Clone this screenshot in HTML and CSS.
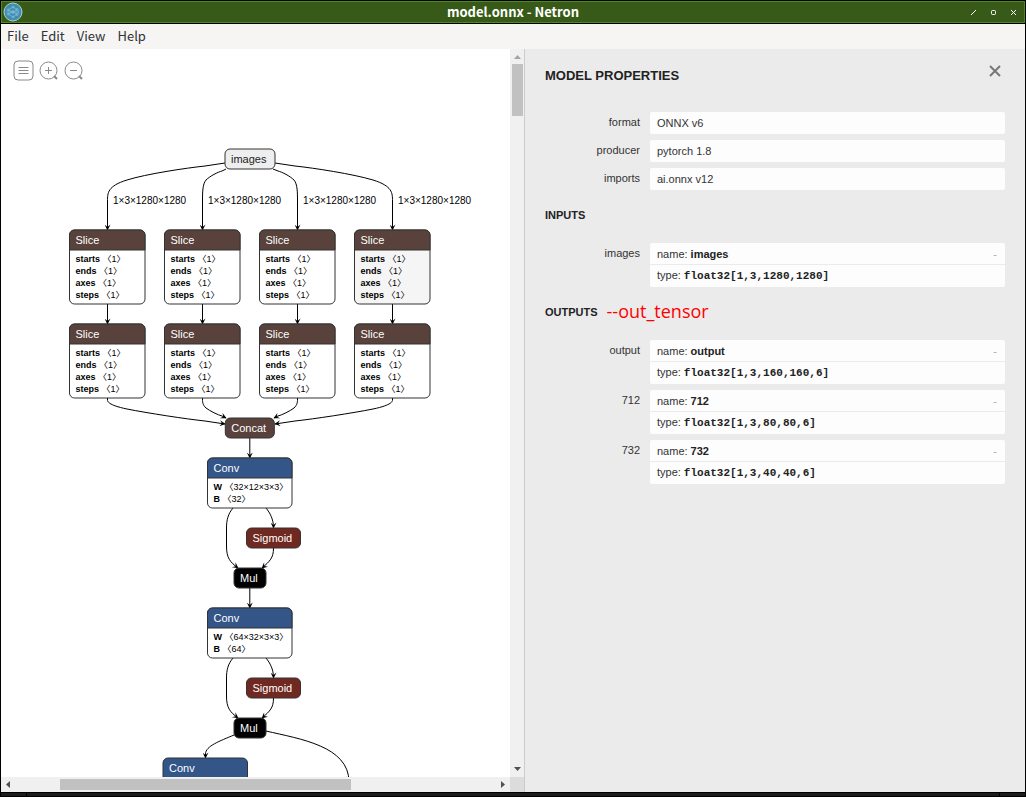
FILE: index.html
```html
<!DOCTYPE html>
<html lang="en">
<head>
<meta charset="utf-8">
<title>model.onnx - Netron</title>
<link rel="stylesheet" href="styles.css">
</head>
<body>
<div class="window">
  <header class="titlebar">
    <svg class="app-icon" width="20" height="20" viewBox="0 0 20 20" aria-hidden="true">
      <circle cx="10" cy="10" r="9" fill="#3f8fb4" stroke="#b5cfc4"/>
      <g fill="none" stroke="#8fc1da" stroke-width="0.6">
        <path d="M5 8L10 5L14 7.500L16 10L14 12.500L10 15L5 12L10 10L5 8M4 10H16M14 7.500L10 10L14 12.500"/>
        <circle cx="5" cy="8" r="1"/><circle cx="5" cy="12" r="1"/><circle cx="10" cy="5" r="1"/><circle cx="10" cy="15" r="1"/><circle cx="10" cy="10" r="1.300"/><circle cx="14" cy="7.500" r="1"/><circle cx="14" cy="12.500" r="1"/>
      </g>
    </svg>
    <h1 class="window-title">model.onnx - Netron</h1>
    <div class="window-buttons">
      <button class="window-button" aria-label="Minimize"><svg width="5" height="5" viewBox="0 0 5 5"><path d="M0 5L5 0"/></svg></button>
      <button class="window-button" aria-label="Maximize"><svg width="5" height="5" viewBox="0 0 5 5"><rect x="0.500" y="0.500" width="4" height="4" rx="1"/></svg></button>
      <button class="window-button" aria-label="Close window"><svg width="5" height="5" viewBox="0 0 5 5"><path d="M0 0L5 5M5 0L0 5"/></svg></button>
    </div>
  </header>
  <nav class="menubar">
    <button class="menu">File</button>
    <button class="menu">Edit</button>
    <button class="menu">View</button>
    <button class="menu">Help</button>
  </nav>
  <main class="content">
    <section class="graph-pane">
      <div class="graph">
        <svg class="graph-canvas" role="img" aria-label="Model graph">
          <defs>
            <marker id="arrow" viewBox="0 0 10 10" refX="9" refY="5" markerUnits="userSpaceOnUse" markerWidth="8" markerHeight="6" orient="auto"><path d="M0 0L10 5L0 10L4 5z"/></marker>
            <g id="item"><path class="node-header" d="M0 20V5A5 5 0 0 1 5 0H70.500A5 5 0 0 1 75.500 5V20z"/></g>
          </defs>
          <g transform="translate(-1 -49)">
            <g class="edges">
              <path d="M225 163L205 166C186 168 146 174 127 180C107.500 186 107.500 193 107.500 201V230"/>
              <path d="M226 169L222 171C218 172 210 176 206 180C202.500 184 202.500 193 202.500 201V230"/>
              <path d="M273 169L278 171C282 172 290 176 294 180C297.500 184 297.500 193 297.500 201V230"/>
              <path d="M275 163L295 166C314 168 353 174 373 180C392.500 186 392.500 193 392.500 201V230"/>
              <path d="M107.500 304V324"/><path d="M202.500 304V324"/><path d="M297.500 304V324"/><path d="M392.500 304V324"/>
              <path d="M107.500 398V400C107.500 401 107.500 405 127 409C147 413 186 419 205 421L225 424"/>
              <path d="M202.500 398V400C202.500 401 202.500 405 206 408C210 411 218 415 222 416L226 418"/>
              <path d="M297.500 398V400C297.500 401 297.500 405 294 408C290 411 282 415 278 416L274 418"/>
              <path d="M392.500 398V400C392.500 401 392.500 405 373 409C353 413 314 419 295 421L275 424"/>
              <path d="M249.800 438V458"/>
              <path d="M233 508C228 514 226.500 520 226.500 528V546C226.500 558 230 562 238 568"/>
              <path d="M266 508C270 513 273.500 519 273.500 528"/>
              <path d="M273.500 548C273.500 558 270 561 262 568"/>
              <path d="M249.800 588V608"/>
              <path d="M233 658C228 664 226.500 670 226.500 678V696C226.500 708 230 712 238 718"/>
              <path d="M266 658C270 663 273.500 669 273.500 678"/>
              <path d="M273.500 698C273.500 708 270 711 262 718"/>
              <path d="M234 735C220 741 205.500 746 205.500 754V758"/>
              <path d="M266 731C300 739 349 746 349 782"/>
            </g>
            <g class="edge-labels">
              <text x="113" y="204">1×3×1280×1280</text><text x="208" y="204">1×3×1280×1280</text><text x="303" y="204">1×3×1280×1280</text><text x="398" y="204">1×3×1280×1280</text>
            </g>
            <g transform="translate(225 149)"><rect class="node-input" width="50" height="20" rx="5"/><text class="input-name" x="6" y="14">images</text></g>

            <g class="tensor" transform="translate(69.500 230)"><rect class="node-body" width="75.500" height="74" rx="5"/><use href="#item"/><text class="op" x="6" y="14">Slice</text><text class="attr" x="6" y="32"><tspan>starts</tspan> 〈1〉</text><text class="attr" x="6" y="44"><tspan>ends</tspan> 〈1〉</text><text class="attr" x="6" y="56"><tspan>axes</tspan> 〈1〉</text><text class="attr" x="6" y="68"><tspan>steps</tspan> 〈1〉</text></g>
            <g class="tensor" transform="translate(164.500 230)"><rect class="node-body" width="75.500" height="74" rx="5"/><use href="#item"/><text class="op" x="6" y="14">Slice</text><text class="attr" x="6" y="32"><tspan>starts</tspan> 〈1〉</text><text class="attr" x="6" y="44"><tspan>ends</tspan> 〈1〉</text><text class="attr" x="6" y="56"><tspan>axes</tspan> 〈1〉</text><text class="attr" x="6" y="68"><tspan>steps</tspan> 〈1〉</text></g>
            <g class="tensor" transform="translate(259.500 230)"><rect class="node-body" width="75.500" height="74" rx="5"/><use href="#item"/><text class="op" x="6" y="14">Slice</text><text class="attr" x="6" y="32"><tspan>starts</tspan> 〈1〉</text><text class="attr" x="6" y="44"><tspan>ends</tspan> 〈1〉</text><text class="attr" x="6" y="56"><tspan>axes</tspan> 〈1〉</text><text class="attr" x="6" y="68"><tspan>steps</tspan> 〈1〉</text></g>
            <g class="tensor" transform="translate(354.500 230)"><rect class="node-body node-hover" width="75.500" height="74" rx="5"/><use href="#item"/><text class="op" x="6" y="14">Slice</text><text class="attr" x="6" y="32"><tspan>starts</tspan> 〈1〉</text><text class="attr" x="6" y="44"><tspan>ends</tspan> 〈1〉</text><text class="attr" x="6" y="56"><tspan>axes</tspan> 〈1〉</text><text class="attr" x="6" y="68"><tspan>steps</tspan> 〈1〉</text></g>

            <g class="tensor" transform="translate(69.500 324)"><rect class="node-body" width="75.500" height="74" rx="5"/><use href="#item"/><text class="op" x="6" y="14">Slice</text><text class="attr" x="6" y="32"><tspan>starts</tspan> 〈1〉</text><text class="attr" x="6" y="44"><tspan>ends</tspan> 〈1〉</text><text class="attr" x="6" y="56"><tspan>axes</tspan> 〈1〉</text><text class="attr" x="6" y="68"><tspan>steps</tspan> 〈1〉</text></g>
            <g class="tensor" transform="translate(164.500 324)"><rect class="node-body" width="75.500" height="74" rx="5"/><use href="#item"/><text class="op" x="6" y="14">Slice</text><text class="attr" x="6" y="32"><tspan>starts</tspan> 〈1〉</text><text class="attr" x="6" y="44"><tspan>ends</tspan> 〈1〉</text><text class="attr" x="6" y="56"><tspan>axes</tspan> 〈1〉</text><text class="attr" x="6" y="68"><tspan>steps</tspan> 〈1〉</text></g>
            <g class="tensor" transform="translate(259.500 324)"><rect class="node-body" width="75.500" height="74" rx="5"/><use href="#item"/><text class="op" x="6" y="14">Slice</text><text class="attr" x="6" y="32"><tspan>starts</tspan> 〈1〉</text><text class="attr" x="6" y="44"><tspan>ends</tspan> 〈1〉</text><text class="attr" x="6" y="56"><tspan>axes</tspan> 〈1〉</text><text class="attr" x="6" y="68"><tspan>steps</tspan> 〈1〉</text></g>
            <g class="tensor" transform="translate(354.500 324)"><rect class="node-body" width="75.500" height="74" rx="5"/><use href="#item"/><text class="op" x="6" y="14">Slice</text><text class="attr" x="6" y="32"><tspan>starts</tspan> 〈1〉</text><text class="attr" x="6" y="44"><tspan>ends</tspan> 〈1〉</text><text class="attr" x="6" y="56"><tspan>axes</tspan> 〈1〉</text><text class="attr" x="6" y="68"><tspan>steps</tspan> 〈1〉</text></g>

            <g class="tensor" transform="translate(225.300 418)"><rect class="node-header" width="49" height="20" rx="5"/><text class="op" x="6" y="14">Concat</text></g>

            <g class="layer" transform="translate(207.500 458)"><rect class="node-body" width="84.500" height="50" rx="5"/><path class="node-header" d="M0 20V5A5 5 0 0 1 5 0H79.500A5 5 0 0 1 84.500 5V20z"/><text class="op" x="6" y="14">Conv</text><text class="attr" x="6" y="32"><tspan>W</tspan> 〈32×12×3×3〉</text><text class="attr" x="6" y="44"><tspan>B</tspan> 〈32〉</text></g>
            <g class="activation" transform="translate(246.500 528)"><rect class="node-header" width="54" height="20" rx="5"/><text class="op" x="6" y="14">Sigmoid</text></g>
            <g class="math" transform="translate(234 568)"><rect class="node-header" width="32" height="20" rx="5"/><text class="op" x="6" y="14">Mul</text></g>

            <g class="layer" transform="translate(207.500 608)"><rect class="node-body" width="84.500" height="50" rx="5"/><path class="node-header" d="M0 20V5A5 5 0 0 1 5 0H79.500A5 5 0 0 1 84.500 5V20z"/><text class="op" x="6" y="14">Conv</text><text class="attr" x="6" y="32"><tspan>W</tspan> 〈64×32×3×3〉</text><text class="attr" x="6" y="44"><tspan>B</tspan> 〈64〉</text></g>
            <g class="activation" transform="translate(246.500 678)"><rect class="node-header" width="54" height="20" rx="5"/><text class="op" x="6" y="14">Sigmoid</text></g>
            <g class="math" transform="translate(234 718)"><rect class="node-header" width="32" height="20" rx="5"/><text class="op" x="6" y="14">Mul</text></g>

            <g class="layer" transform="translate(163 758)"><path class="node-header" d="M0 20V5A5 5 0 0 1 5 0H79.500A5 5 0 0 1 84.500 5V20z"/><text class="op" x="6" y="14">Conv</text></g>
          </g>
        </svg>
        <div class="toolbar">
          <button class="tool" aria-label="Model properties"><svg width="21" height="21" viewBox="0 0 21 21"><rect x="1" y="1" width="19" height="19" rx="4"/><path d="M5.500 7.500H15.500M5.500 10.500H15.500M5.500 13.500H15.500"/></svg></button>
          <button class="tool" aria-label="Zoom in"><svg width="21" height="21" viewBox="0 0 21 21"><circle cx="10.500" cy="10.500" r="8.500"/><path d="M7 10.500H14M10.500 7V14"/><path class="handle" d="M16 16L19 19"/></svg></button>
          <button class="tool" aria-label="Zoom out"><svg width="21" height="21" viewBox="0 0 21 21"><circle cx="10.500" cy="10.500" r="8.500"/><path d="M7 10.500H14"/><path class="handle" d="M16 16L19 19"/></svg></button>
        </div>
      </div>
      <div class="scroll-y">
        <svg class="dim" width="14" height="15" viewBox="0 0 14 15"><path d="M4 10H11L7.500 6z"/></svg>
        <div class="thumb-y"></div>
        <svg class="last" width="14" height="15" viewBox="0 0 14 15"><path d="M4 5H11L7.500 9z"/></svg>
      </div>
      <div class="scroll-x">
        <svg width="15" height="15" viewBox="0 0 15 15"><path d="M9 4V11L5 7.500z"/></svg>
        <div class="track-x"><div class="thumb-x"></div></div>
        <svg width="15" height="15" viewBox="0 0 15 15"><path d="M6 4V11L10 7.500z"/></svg>
      </div>
      <div class="scroll-corner"></div>
    </section>
    <aside class="sidebar">
      <div class="sidebar-head">
        <h2 class="sidebar-title">MODEL PROPERTIES</h2>
        <button class="close" aria-label="Close"><svg width="12" height="12" viewBox="0 0 12 12"><path d="M1 1L11 11M11 1L1 11"/></svg></button>
      </div>
      <dl class="properties">
        <div class="property"><dt>format</dt><dd><div class="line">ONNX v6</div></dd></div>
        <div class="property"><dt>producer</dt><dd><div class="line">pytorch 1.8</div></dd></div>
        <div class="property"><dt>imports</dt><dd><div class="line">ai.onnx v12</div></dd></div>
      </dl>
      <h3 class="section">INPUTS</h3>
      <dl class="properties">
        <div class="property"><dt>images</dt><dd><div class="line">name: <b>images</b><button class="expander" aria-label="Collapse images">-</button></div><div class="line">type: <code>float32[1,3,1280,1280]</code></div></dd></div>
      </dl>
      <h3 class="section">OUTPUTS <span class="note">--out_tensor</span></h3>
      <dl class="properties">
        <div class="property"><dt>output</dt><dd><div class="line">name: <b>output</b><button class="expander" aria-label="Collapse output">-</button></div><div class="line">type: <code>float32[1,3,160,160,6]</code></div></dd></div>
        <div class="property"><dt>712</dt><dd><div class="line">name: <b>712</b><button class="expander" aria-label="Collapse 712">-</button></div><div class="line">type: <code>float32[1,3,80,80,6]</code></div></dd></div>
        <div class="property"><dt>732</dt><dd><div class="line">name: <b>732</b><button class="expander" aria-label="Collapse 732">-</button></div><div class="line">type: <code>float32[1,3,40,40,6]</code></div></dd></div>
      </dl>
    </aside>
  </main>
  <footer class="frame-bottom"><span class="grip"></span><span class="frame-bar"></span><span class="grip"></span></footer>
</div>
</body>
</html>
```
FILE: styles.css
```css
* { box-sizing: border-box; }

body {
  margin: 0;
  background: #000;
  font-family: "Liberation Sans", "Noto Sans CJK SC", sans-serif;
  font-size: 11px;
  color: #333;
}

button {
  margin: 0;
  padding: 0;
  border: 0;
  background: none;
  font: inherit;
  color: inherit;
}

svg { display: block; }

.window {
  display: flex;
  flex-direction: column;
  height: 100vh;
  padding: 1px 1px 0;
  overflow: hidden;
}

/* Title bar */
.titlebar {
  display: grid;
  grid-template-columns: 70px 1fr 70px;
  align-items: center;
  height: 22px;
  margin-bottom: 1px;
  border: 1px solid #4f8a20;
  background: #375a18;
  color: #fff;
  flex: none;
}

.app-icon { margin-left: 1px; }

.window-title {
  margin: 0;
  font: bold 13px/18px "Noto Sans CJK SC", "Noto Sans", sans-serif;
  text-align: center;
}

.window-buttons {
  display: flex;
  justify-content: flex-end;
  gap: 15px;
  padding-right: 8px;
}

.window-button svg {
  fill: none;
  stroke: #fff;
  stroke-width: 1;
}

/* Menus */
.menubar {
  display: flex;
  gap: 12px;
  height: 25px;
  padding: 0 6px 2px;
  background: #f6f5f4;
  color: #2e3436;
  font: 13px/23px "Noto Sans CJK SC", "Noto Sans", sans-serif;
  flex: none;
}

.content {
  display: flex;
  flex: 1;
  min-height: 0;
}

/* Graph */
.graph-pane {
  display: grid;
  grid-template-columns: 1fr 14px;
  grid-template-rows: 1fr 15px;
  flex: 1;
  min-width: 0;
  background: #fff;
}

.graph {
  position: relative;
  min-width: 0;
  min-height: 0;
  overflow: hidden;
}

.graph-canvas {
  width: 100%;
  height: 100%;
}

.edges path {
  fill: none;
  stroke: #000;
  marker-end: url(#arrow);
}

.edge-labels text { font-size: 10px; fill: #000; }

.node-body { fill: #fff; stroke: #333; }
.node-hover { fill: #f5f5f5; }
.node-header { stroke: #333; }
.node-input { fill: #eee; stroke: #333; }
.input-name { font-size: 11px; fill: #222; }

.tensor { fill: #59423b; }
.layer { fill: #335588; }
.activation { fill: #702921; }
.math { fill: #000; }

.op { font-size: 11px; fill: #fff; }
.attr { font-size: 9px; fill: #000; white-space: pre; }
.attr tspan { font-weight: bold; }

.toolbar {
  position: absolute;
  top: 11px;
  left: 12px;
  display: flex;
  gap: 4px;
}

.tool svg { fill: none; stroke: #888; }
.tool .handle { stroke-width: 2; }

/* Scroll bars */
.scroll-y,
.scroll-x {
  display: flex;
  background: #f0f0f0;
  fill: #505050;
}

.scroll-y { flex-direction: column; }
.dim { fill: #a3a3a3; }
.last { margin-top: auto; }

.thumb-y {
  height: 52px;
  margin: 0 1px 0 2px;
  background: #c1c1c1;
}

.track-x { flex: 1; padding: 2px 0 2px 44px; }

.thumb-x {
  width: 67%;
  height: 11px;
  background: #c1c1c1;
}

.scroll-corner { background: #dcdcdc; }

/* Properties */
.sidebar {
  width: 501px;
  max-width: 60%;
  padding: 0 20px;
  border-left: 1px solid #ccc;
  background: #ebebeb;
  overflow: hidden;
}

.sidebar-head {
  display: flex;
  justify-content: space-between;
  height: 63px;
  padding: 16px 4px 0 0;
}

.sidebar-title {
  margin: 0;
  font-size: 13px;
  line-height: 22px;
  color: #222;
}

.close { height: 12px; }
.close svg { fill: none; stroke: #777; stroke-width: 2; }

.properties {
  display: flex;
  flex-direction: column;
  gap: 6px;
  margin: 0;
}

.property {
  display: grid;
  grid-template-columns: 95px 1fr;
  column-gap: 10px;
}

.property dt {
  line-height: 20px;
  text-align: right;
}

.property dd {
  margin: 0;
  border-radius: 2px;
  background: #fdfdfd;
}

.line {
  display: flex;
  align-items: baseline;
  gap: 3px;
  height: 22px;
  padding: 0 8px 0 7px;
  line-height: 22px;
}

.line:not(:last-child) { height: 21px; }

.line + .line {
  height: 23px;
  border-top: 1px solid #ebebeb;
  line-height: 21px;
}

.line b,
.line code { color: #222; }

.line code {
  font: bold 11px "Liberation Mono", monospace;
}

.expander {
  margin-left: auto;
  color: #aaa;
}

.section {
  display: flex;
  align-items: center;
  gap: 9px;
  height: 14px;
  margin: 18px 0 21px;
  font-size: 11px;
  line-height: 14px;
  color: #222;
}

.note {
  padding-bottom: 3px;
  font: 18px/14px "Open Sans", "Noto Sans", sans-serif;
  color: #f00;
}

/* Lower window frame */
.frame-bottom {
  display: flex;
  gap: 1px;
  height: 5px;
  padding: 1px 0;
  flex: none;
}

.grip,
.frame-bar { background: #1c1c1c; }
.grip { width: 25px; }
.frame-bar { flex: 1; }
```
